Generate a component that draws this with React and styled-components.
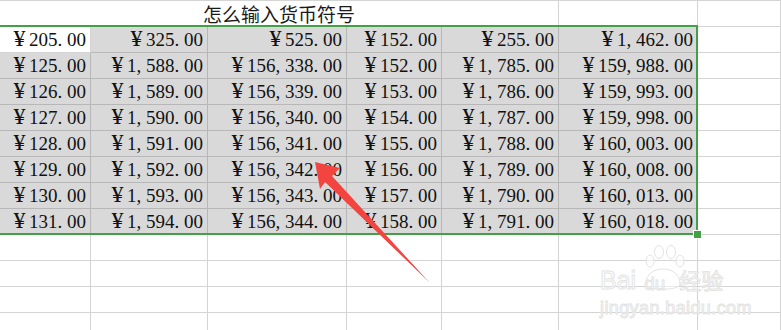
import React from "react";
import styled, { createGlobalStyle } from "styled-components";

const GlobalStyle = createGlobalStyle`
  html, body {
    margin: 0;
    padding: 0;
    background: #fff;
  }
`;

const Hoja = styled.div`
  position: relative;
  width: 781px;
  height: 330px;
  overflow: hidden;
  background: #fff;
`;

const Rejilla = styled.div`
  display: grid;
  grid-template-columns: 91px 117px 139px 95px 117px 139px 1fr;
  grid-auto-rows: 26px;
  border-top: 1px solid #d4d4d4;
`;

const Celda = styled.div`
  box-sizing: border-box;
  display: flex;
  align-items: flex-end;
  justify-content: flex-end;
  padding: 0 4px 1px 0;
  line-height: 22px;
  background: ${(p) => (p.$sel ? "#d9d9d9" : "#fff")};
  border-right: 1px solid ${(p) => (p.$sel ? "#b7b7b7" : "#d4d4d4")};
  border-bottom: 1px solid ${(p) => (p.$sel ? "#b7b7b7" : "#d4d4d4")};
  font-family: "Liberation Serif", "Noto Sans CJK SC", serif;
  font-size: 19px;
  color: #111;
  white-space: nowrap;
`;

const Titulo = styled(Celda)`
  grid-column: 1 / 6;
  justify-content: center;
  padding: 0 0 1px 0;
  font-family: "Noto Sans CJK SC", sans-serif;
  font-size: 19px;
  color: #1a1a1a;
`;

const Yen = styled.span`
  display: inline-block;
  width: 19px;
  text-align: center;
  font-size: 24px;
  line-height: 20px;
  vertical-align: baseline;
`;

const Punto = styled.span`
  display: inline-block;
  width: 0.5em;
  text-align: left;
`;

const MarcoSeleccion = styled.div`
  position: absolute;
  left: -5px;
  top: 25px;
  width: 703px;
  height: 210px;
  box-sizing: border-box;
  border: 2px solid #43a047;
  pointer-events: none;
`;

const Tirador = styled.div`
  position: absolute;
  left: 694px;
  top: 231px;
  width: 7px;
  height: 7px;
  background: #43a047;
  box-shadow: 0 0 0 1px #fff;
`;

const Capa = styled.svg`
  position: absolute;
  left: 0;
  top: 0;
  pointer-events: none;
`;

const MarcaAgua = styled.div`
  position: absolute;
  left: 600px;
  top: 244px;
  width: 150px;
  font-family: "Liberation Sans", "Noto Sans CJK SC", sans-serif;
  color: rgba(255, 255, 255, 0.6);
  -webkit-text-stroke: 1px #e4e4e4;
  pointer-events: none;
`;

const LineaMarca = styled.div`
  position: relative;
  display: flex;
  align-items: flex-end;
  gap: ${(p) => p.$gap || 0}px;
  font-size: ${(p) => p.$size}px;
  line-height: 1;
  letter-spacing: ${(p) => p.$ls || 0}px;
`;

const datos = [
  ["205.00", "325.00", "525.00", "152.00", "255.00", "1,462.00"],
  ["125.00", "1,588.00", "156,338.00", "152.00", "1,785.00", "159,988.00"],
  ["126.00", "1,589.00", "156,339.00", "153.00", "1,786.00", "159,993.00"],
  ["127.00", "1,590.00", "156,340.00", "154.00", "1,787.00", "159,998.00"],
  ["128.00", "1,591.00", "156,341.00", "155.00", "1,788.00", "160,003.00"],
  ["129.00", "1,592.00", "156,342.00", "156.00", "1,789.00", "160,008.00"],
  ["130.00", "1,593.00", "156,343.00", "157.00", "1,790.00", "160,013.00"],
  ["131.00", "1,594.00", "156,344.00", "158.00", "1,791.00", "160,018.00"],
];

const Moneda = ({ valor }) => (
  <span>
    <Yen>¥</Yen>
    {valor.split("").map((c, i) =>
      c === "," || c === "." ? <Punto key={i}>{c}</Punto> : <React.Fragment key={i}>{c}</React.Fragment>
    )}
  </span>
);

const Huella = () => (
  <svg width="60" height="48" viewBox="0 0 60 48" style={{ position: "absolute", left: 38, top: 0 }}>
    <g fill="rgba(255,255,255,0.5)" stroke="#e2e2e2" strokeWidth="1">
      <ellipse cx="12" cy="17" rx="4" ry="6" />
      <ellipse cx="21" cy="8" rx="4.5" ry="6.5" />
      <ellipse cx="33" cy="8" rx="4.5" ry="6.5" />
      <ellipse cx="42" cy="17" rx="4" ry="6" />
      <path d="M8 40 C8 30 16 25 25 25 C34 25 42 30 42 40 C42 47 8 47 8 40 Z" />
    </g>
  </svg>
);

export default function App() {
  return (
    <>
      <GlobalStyle />
      <Hoja>
        <Rejilla>
          <Titulo>怎么输入货币符号</Titulo>
          <Celda />
          <Celda />
          {datos.map((fila, r) => (
            <React.Fragment key={r}>
              {fila.map((v, c) => (
                <Celda key={c} $sel={!(r === 0 && c === 0)}>
                  <Moneda valor={v} />
                </Celda>
              ))}
              <Celda />
            </React.Fragment>
          ))}
          {[0, 1, 2, 3].map((r) =>
            [0, 1, 2, 3, 4, 5, 6].map((c) => <Celda key={`v${r}-${c}`} />)
          )}
        </Rejilla>

        <MarcoSeleccion />
        <Tirador />

        <MarcaAgua>
          <Huella />
          <div style={{ height: 24 }} />
          <LineaMarca $size={25} $gap={8}>
            <span>Bai</span>
            <span style={{ fontSize: 19 }}>du</span>
            <span style={{ fontSize: 22, marginLeft: 6 }}>经验</span>
          </LineaMarca>
          <LineaMarca $size={18} $ls={0.4} style={{ marginTop: 6 }}>
            jingyan.baidu.com
          </LineaMarca>
        </MarcaAgua>

        <Capa width="781" height="330" viewBox="0 0 781 330">
          <polygon
            points="315,162 340,168 332,176 429,282 325,182 320,189"
            fill="#f2453f"
          />
        </Capa>
      </Hoja>
    </>
  );
}
